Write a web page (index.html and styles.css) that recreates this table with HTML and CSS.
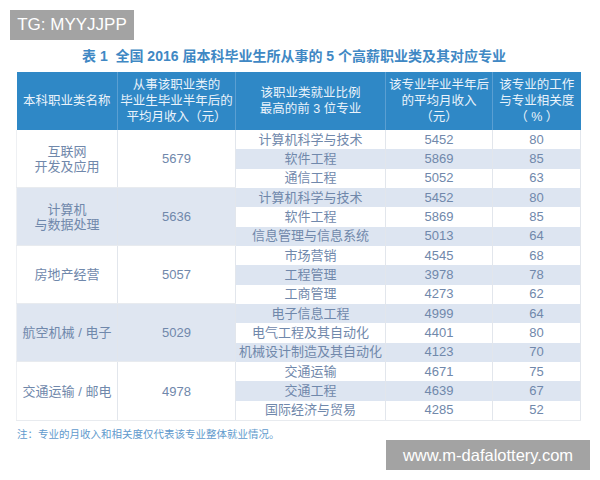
FILE: index.html
```html
<!DOCTYPE html>
<html lang="zh">
<head>
<meta charset="utf-8">
<link rel="stylesheet" href="styles.css">
</head>
<body>
<div class="page">
  <div class="tag">TG: MYYJJPP</div>
  <h1 class="title">表 1&nbsp; 全国 2016 届本科毕业生所从事的 5 个高薪职业类及其对应专业</h1>
  <table class="data">
    <colgroup>
      <col class="c1"><col class="c2"><col class="c3"><col class="c4"><col class="c5">
    </colgroup>
    <thead>
      <tr>
        <th>本科职业类名称</th>
        <th>从事该职业类的<br>毕业生毕业半年后的<br>平均月收入（元）</th>
        <th>该职业类就业比例<br>最高的前 3 位专业</th>
        <th>该专业毕业半年后<br>的平均月收入<br>（元）</th>
        <th>该专业的工作<br>与专业相关度<br>（ % ）</th>
      </tr>
    </thead>
    <tbody>
      <tr class="w"><td rowspan="3" class="g gw">互联网<br>开发及应用</td><td rowspan="3" class="g gw">5679</td><td>计算机科学与技术</td><td>5452</td><td>80</td></tr>
      <tr class="b"><td>软件工程</td><td>5869</td><td>85</td></tr>
      <tr class="w"><td>通信工程</td><td>5052</td><td>63</td></tr>
      <tr class="b"><td rowspan="3" class="g gb">计算机<br>与数据处理</td><td rowspan="3" class="g gb">5636</td><td>计算机科学与技术</td><td>5452</td><td>80</td></tr>
      <tr class="w"><td>软件工程</td><td>5869</td><td>85</td></tr>
      <tr class="b"><td>信息管理与信息系统</td><td>5013</td><td>64</td></tr>
      <tr class="w"><td rowspan="3" class="g gw">房地产经营</td><td rowspan="3" class="g gw">5057</td><td>市场营销</td><td>4545</td><td>68</td></tr>
      <tr class="b"><td>工程管理</td><td>3978</td><td>78</td></tr>
      <tr class="w"><td>工商管理</td><td>4273</td><td>62</td></tr>
      <tr class="b"><td rowspan="3" class="g gb">航空机械 / 电子</td><td rowspan="3" class="g gb">5029</td><td>电子信息工程</td><td>4999</td><td>64</td></tr>
      <tr class="w"><td>电气工程及其自动化</td><td>4401</td><td>80</td></tr>
      <tr class="b"><td>机械设计制造及其自动化</td><td>4123</td><td>70</td></tr>
      <tr class="w"><td rowspan="3" class="g gw">交通运输 / 邮电</td><td rowspan="3" class="g gw">4978</td><td>交通运输</td><td>4671</td><td>75</td></tr>
      <tr class="b"><td>交通工程</td><td>4639</td><td>67</td></tr>
      <tr class="w"><td>国际经济与贸易</td><td>4285</td><td>52</td></tr>
    </tbody>
  </table>
  <p class="note">注：专业的月收入和相关度仅代表该专业整体就业情况。</p>
</div>
<div class="watermark">www.m-dafalottery.com</div>
</body>
</html>
```

FILE: styles.css
```css
html, body {
  margin: 0;
  padding: 0;
  background: #ffffff;
}
body {
  width: 600px;
  height: 480px;
  position: relative;
  overflow: hidden;
  font-family: "Noto Sans CJK SC", "Liberation Sans", sans-serif;
}
.page {
  padding: 10px 20px 0 16px;
}
.tag {
  display: inline-block;
  margin-left: -6px;
  width: 124px;
  height: 30px;
  line-height: 30px;
  background: #a3a3a3;
  color: #ffffff;
  font-family: "Liberation Sans", sans-serif;
  font-size: 17px;
  text-align: center;
  vertical-align: top;
}
.title {
  margin: 7px 0 0 0;
  height: 25px;
  line-height: 18px;
  font-size: 14px;
  font-weight: bold;
  color: #4088c4;
  text-align: center;
  font-family: "Liberation Sans", "Noto Sans CJK SC", sans-serif;
  padding-right: 8px;
}
.data {
  border-collapse: collapse;
  table-layout: fixed;
  width: 564px;
  font-family: "Liberation Sans", "Noto Sans CJK SC", sans-serif;
}
.c1 { width: 101px; }
.c2 { width: 118px; }
.c3 { width: 150px; }
.c4 { width: 107px; }
.c5 { width: 88px; }
.data th {
  background: #2f88c6;
  color: #eaf3fb;
  font-weight: normal;
  font-size: 12.5px;
  line-height: 16px;
  height: 58px;
  padding: 0;
  border-right: 1px solid #5a9fd2;
  text-align: center;
  vertical-align: middle;
}
.data th:last-child { border-right: none; }
.data td {
  height: 19.33px;
  padding: 0;
  font-size: 13px;
  line-height: 16px;
  color: #7088ab;
  text-align: center;
  vertical-align: middle;
  border-right: 1px solid #e2e6ec;
}
.data tr.w td { background: #ffffff; }
.data tr.b td { background: #dde5f1; }
.data td.g {
  font-size: 13px;
  line-height: 15px;
}
.data tr td.gw { background: #ffffff; }
.data tr td.gb { background: #dfe6f1; }
.data td:first-child { border-left: 1px solid #eef0f3; }
.data tbody tr:last-child td,
.data td.g { border-bottom: 1px solid #e8ebef; }
.note {
  margin: 6px 0 0 1px;
  font-size: 10.5px;
  color: #5f9acd;
  font-family: "Noto Sans CJK SC", sans-serif;
  line-height: 14px;
}
.watermark {
  position: absolute;
  left: 386px;
  top: 440px;
  width: 204px;
  height: 30px;
  line-height: 30px;
  background: #a3a3a3;
  color: #ffffff;
  font-family: "Liberation Sans", sans-serif;
  font-size: 16.5px;
  text-align: center;
}
```
